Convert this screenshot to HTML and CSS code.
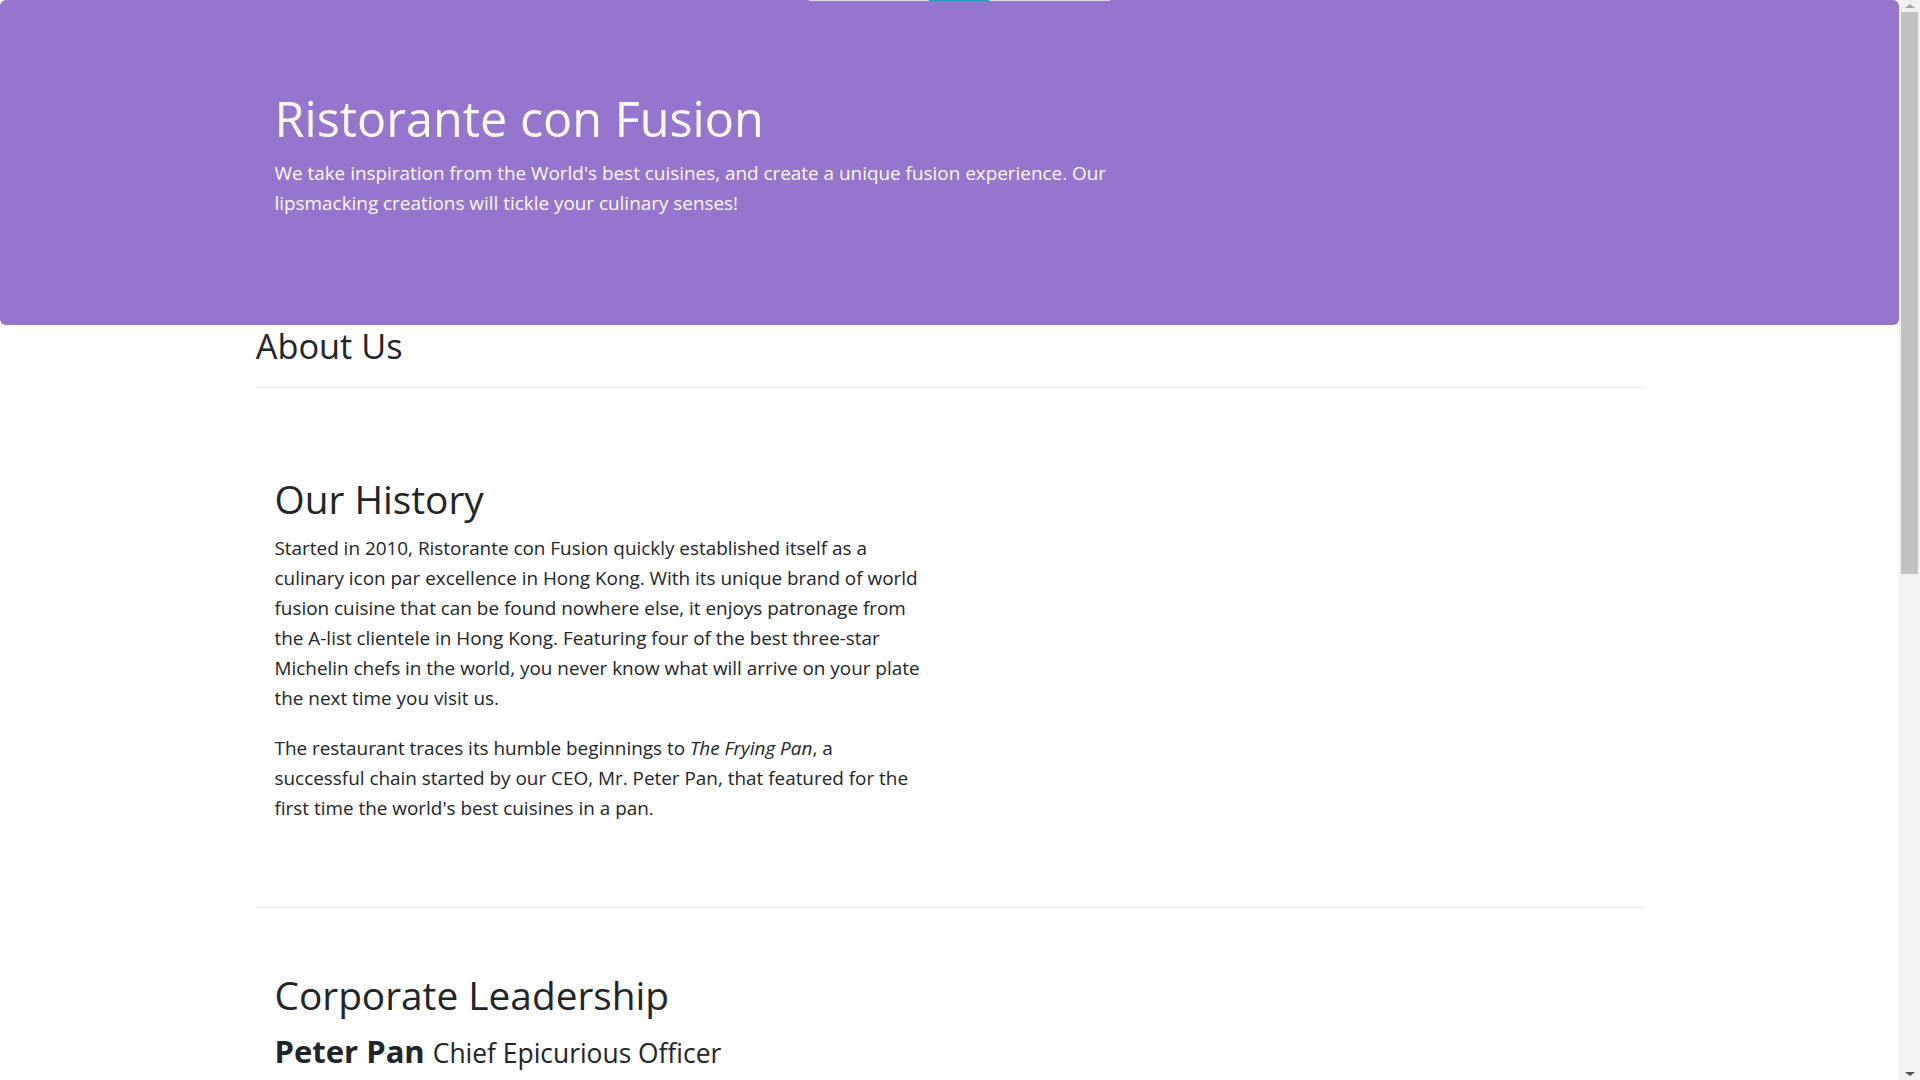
FILE: index.html
```html
<!DOCTYPE html>
<html lang="en">
<head>
<meta charset="utf-8">
<title>Ristorante con Fusion: About Us</title>
<link rel="stylesheet" href="styles.css">
</head>
<body>
<div class="screen">
  <div class="page">
    <div class="topline"><span class="topline-accent"></span></div>
    <header class="jumbotron">
      <div class="container">
        <div class="row row-header">
          <div class="col col-8">
            <h1>Ristorante con Fusion</h1>
            <p>We take inspiration from the World's best cuisines, and create a unique fusion experience. Our lipsmacking creations will tickle your culinary senses!</p>
          </div>
        </div>
      </div>
    </header>
    <div class="container">
      <div class="row">
        <div class="col col-12">
          <h3>About Us</h3>
          <hr>
        </div>
      </div>
      <div class="row row-content row-history">
        <div class="col col-6 col-history">
          <h2>Our History</h2>
          <p>Started in 2010, Ristorante con Fusion quickly established itself as a culinary icon par excellence in Hong Kong. With its unique brand of world fusion cuisine that can be found nowhere else, it enjoys patronage from the A-list clientele in Hong Kong. Featuring four of the best three-star Michelin chefs in the world, you never know what will arrive on your plate the next time you visit us.</p>
          <p>The restaurant traces its humble beginnings to <em>The Frying Pan</em>, a successful chain started by our CEO, Mr. Peter Pan, that featured for the first time the world's best cuisines in a pan.</p>
        </div>
      </div>
      <div class="row row-content">
        <div class="col col-12">
          <h2>Corporate Leadership</h2>
        </div>
        <div class="col col-12">
          <h4 class="person">Peter Pan <small>Chief Epicurious Officer</small></h4>
        </div>
      </div>
    </div>
  </div>
  <div class="scrollbar">
    <div class="sb-btn"><span class="sb-arrow-up"></span></div>
    <div class="sb-thumb"></div>
    <div class="sb-track"></div>
    <div class="sb-btn"><span class="sb-arrow-down"></span></div>
  </div>
</div>
</body>
</html>
```

FILE: styles.css
```css
html, body {
  margin: 0;
  padding: 0;
  height: 100%;
  overflow: hidden;
  background: #ffffff;
}

* { box-sizing: border-box; }

.screen {
  display: flex;
  height: 1080px;
  width: 1920px;
}

.page {
  flex: 1;
  position: relative;
  overflow: hidden;
  font-family: "Segoe UI", "Open Sans", "Noto Sans", sans-serif;
  font-size: 18.9px;
  line-height: 30px;
  color: #212529;
}

.topline {
  position: absolute;
  top: 0;
  left: 809px;
  width: 301px;
  height: 1px;
  background: #dcdcdc;
  z-index: 2;
}

.topline-accent {
  position: absolute;
  top: 0;
  left: 120px;
  width: 60px;
  height: 1px;
  background: #17a2b8;
}

.jumbotron {
  padding: 87.5px 37.5px;
  margin: 0;
  background: #9575CD;
  color: #FFFAF0;
  border-radius: 6px;
}

.container {
  width: 100%;
  max-width: 1425px;
  margin: 0 auto;
  padding: 0 18.75px;
}

.row {
  display: flex;
  flex-wrap: wrap;
  align-content: flex-start;
  margin: 0 -18.75px;
}

.row-header,
.row-content {
  margin: 0 auto;
}

.row-content {
  padding: 62.5px 0;
  border-bottom: 1px solid #e6e6e6;
  min-height: 500px;
}

.row-history {
  padding-top: 67px;
}

.col {
  padding: 0 18.75px;
}

.col-12 { width: 100%; }
.col-8 { width: 66.6667%; }
.col-6 { width: 50%; }

.col-history {
  padding-right: 26px;
}

h1, h2, h3, h4 {
  margin: 0 0 10px;
  font-weight: 500;
}

h1 { font-size: 48.5px; line-height: 60px; }
h2 { font-size: 38.8px; line-height: 48px; }
h3 { font-size: 34.3px; line-height: 42px; }
h4 { font-size: 31px; line-height: 36px; }

p {
  margin: 0 0 20px;
}

hr {
  margin: 20px 0;
  border: 0;
  border-top: 1.25px solid rgba(0, 0, 0, 0.1);
  height: 0;
}

.person {
  font-weight: 700;
  margin-top: 4px;
}

.person small {
  font-size: 26.4px;
  font-weight: 400;
}

.scrollbar {
  width: 21px;
  flex: none;
  background: #f1f1f1;
  display: flex;
  flex-direction: column;
  align-items: center;
}

.sb-btn {
  height: 12px;
  width: 100%;
  display: flex;
  align-items: center;
  justify-content: center;
}

.sb-arrow-up {
  width: 0;
  height: 0;
  border-left: 5px solid transparent;
  border-right: 5px solid transparent;
  border-bottom: 4px solid #a3a3a3;
}

.sb-arrow-down {
  width: 0;
  height: 0;
  border-left: 5px solid transparent;
  border-right: 5px solid transparent;
  border-top: 4px solid #505050;
}

.sb-thumb {
  width: 17px;
  height: 562px;
  background: #c1c1c1;
}

.sb-track {
  flex: 1;
}
```
